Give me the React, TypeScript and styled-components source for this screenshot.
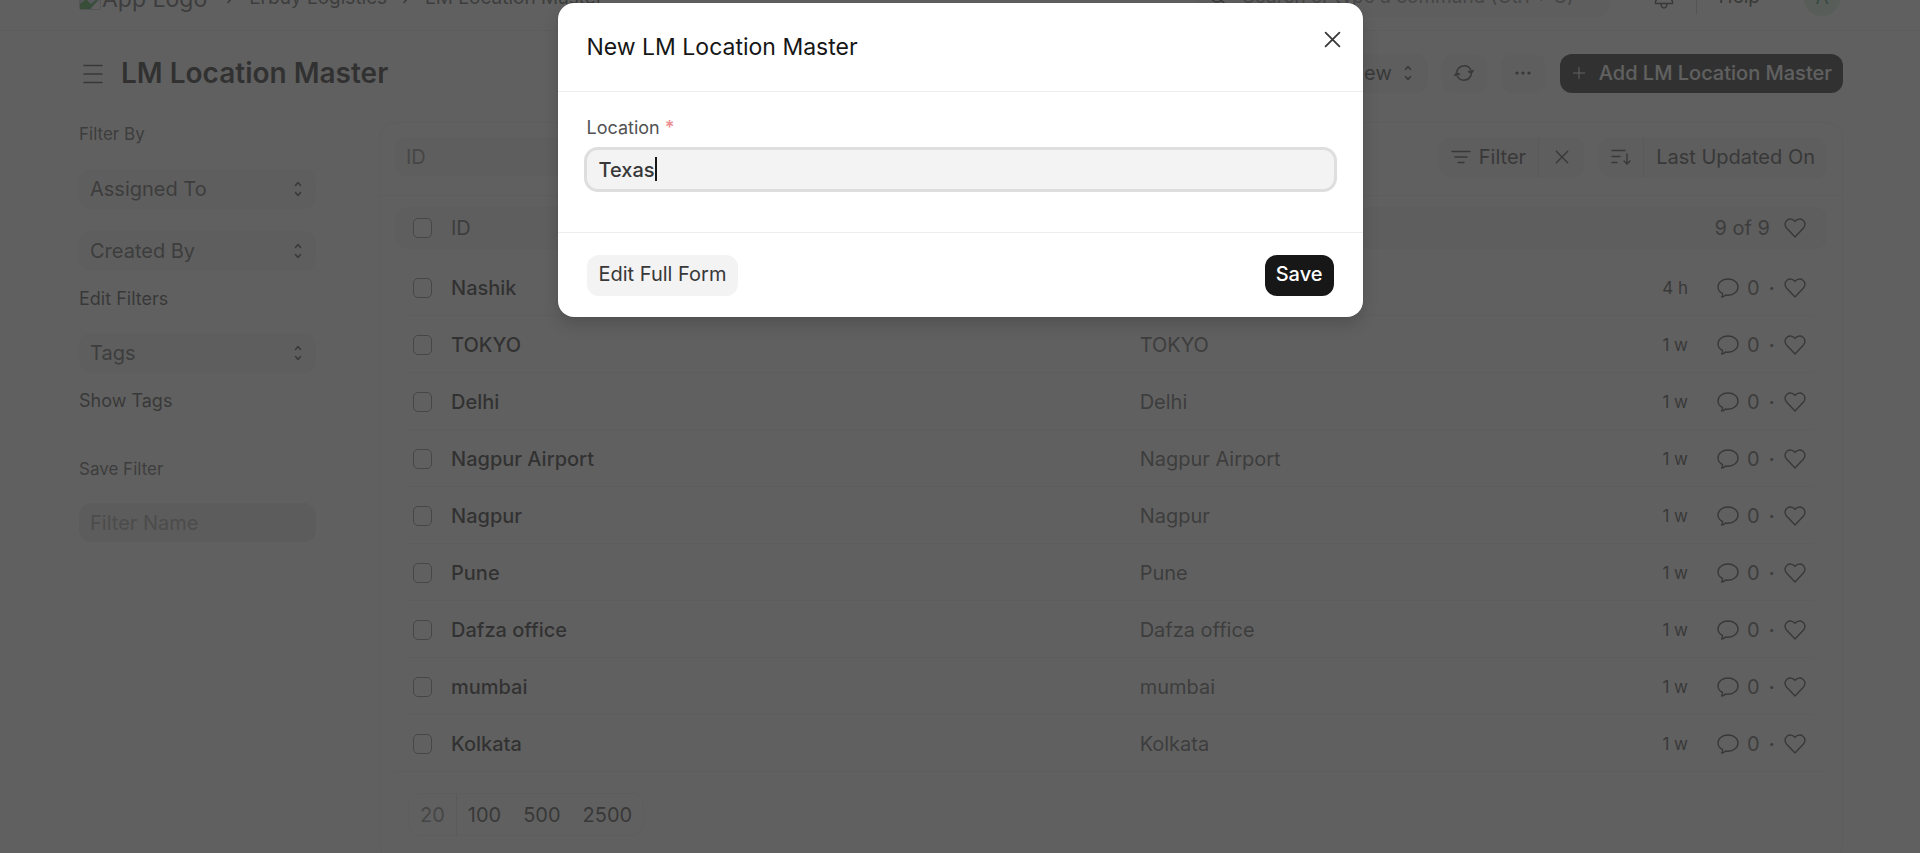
import React, { useState } from "react";
import styled, { createGlobalStyle } from "styled-components";

const Global = createGlobalStyle`
  * { box-sizing: border-box; }
  html, body { margin: 0; background: #fff; }
  body, button, input, select {
    font-family: Inter, "Liberation Sans", sans-serif;
    font-size: 20px;
    line-height: 24px;
    color: #383838;
  }
  button, input, select { border: 0; margin: 0; }
  button { cursor: pointer; }
  a { color: inherit; text-decoration: none; }
  svg { display: block; flex: none; }
`;

const Viewport = styled.div`
  position: relative;
  height: 100vh;
  overflow: hidden;
`;

const Page = styled.div`
  padding-bottom: 40px;
`;

const Navbar = styled.header`
  display: flex;
  align-items: center;
  justify-content: space-between;
  height: 69px;
  margin-top: -38px;
  padding: 0 79px;
  border-bottom: 1px solid #ededed;
  font-size: 19px;
`;

const Crumbs = styled.nav`
  display: flex;
  align-items: center;
  gap: 16px;
  padding-top: 4px;
  color: #525252;
`;

const Logo = styled.a`
  display: flex;
  align-items: center;
  gap: 1px;
  margin-right: 4px;
  padding-top: 2px;
  font-size: 23px;
  line-height: 28px;
`;

const NavTools = styled.div`
  display: flex;
  align-items: center;
`;

const SearchBox = styled.label`
  display: flex;
  align-items: center;
  gap: 16px;
  width: 414px;
  height: 42px;
  padding: 2px 14px 0;
  border-radius: 12px;
  background: #f3f3f3;
`;

const SearchInput = styled.input`
  flex: 1;
  min-width: 0;
  padding: 0;
  font-size: 19px;
  background: transparent;
  outline: 0;
  &::placeholder { color: #7c7c7c; opacity: 1; }
`;

const BellButton = styled.button`
  margin: 0 22px 0 45px;
  padding: 0;
  background: none;
`;

const HelpButton = styled.button`
  display: flex;
  align-items: center;
  gap: 9px;
  height: 36px;
  padding: 2px 24px 0 22px;
  font-size: 19px;
  background: none;
  border-left: 1px solid #c7c7c7;
`;

const Avatar = styled.span`
  display: grid;
  place-items: center;
  width: 38px;
  height: 40px;
  padding-top: 4px;
  border-radius: 50%;
  background: #daf0e1;
  color: #278f5e;
`;

const PageHead = styled.div`
  display: flex;
  align-items: center;
  justify-content: space-between;
  padding: 23px 77px 0 79px;
`;

const TitleGroup = styled.div`
  display: flex;
  align-items: center;
  gap: 14px;
`;

const Title = styled.h1`
  margin: 0;
  padding-bottom: 2px;
  font-size: 28px;
  line-height: 36px;
  font-weight: 600;
  color: #171717;
`;

const MenuButton = styled.button`
  padding: 0;
  background: none;
`;

const Actions = styled.div`
  display: flex;
  gap: 14px;
  > button { height: 39px; padding-bottom: 2px; }
`;

const Button = styled.button<{ $kind?: "dark" | "light"; $gap?: number }>`
  display: flex;
  align-items: center;
  justify-content: center;
  gap: ${(p) => p.$gap ?? 8}px;
  height: 41px;
  min-width: 45px;
  padding: 0 ${(p) => (p.$kind === "dark" ? 11 : 12)}px;
  border-radius: 12px;
  white-space: nowrap;
  background: ${(p) => (p.$kind === "dark" ? "#171717" : "#f3f3f3")};
  color: ${(p) => (p.$kind === "dark" ? "#fff" : "#383838")};
  font-weight: ${(p) => (p.$kind === "dark" ? 500 : 400)};
`;

const ViewButton = styled(Button)`
  padding-right: 16px;
`;

const Body = styled.div`
  display: grid;
  grid-template-columns: 237px minmax(0, 1fr);
  gap: 63px;
  padding: 29px 77px 0 79px;
`;

const Sidebar = styled.aside`
  display: flex;
  flex-direction: column;
  align-items: stretch;
`;

const SideLabel = styled.div<{ $top?: number }>`
  margin-top: ${(p) => p.$top ?? 0}px;
  font-size: 17px;
  line-height: 24px;
  color: #525252;
`;

const SideLink = styled.a`
  margin-top: 16px;
  font-size: 18px;
  line-height: 24px;
`;

const SideSelect = styled.button<{ $top: number }>`
  display: flex;
  align-items: center;
  justify-content: space-between;
  height: 40px;
  margin-top: ${(p) => p.$top}px;
  padding: 0 14px 0 11px;
  border-radius: 12px;
  background: #f3f3f3;
  color: #525252;
`;

const SideInput = styled.input`
  width: 100%;
  height: 39px;
  margin-top: 22px;
  padding: 0 11px;
  border-radius: 12px;
  background: #e9e9e9;
  outline: 0;
  &::placeholder { color: #999; opacity: 1; }
`;

const Card = styled.main`
  border: 1px solid #ededed;
  border-radius: 16px;
  padding-bottom: 24px;
`;

const FilterBar = styled.div`
  display: flex;
  align-items: flex-start;
  gap: 15px;
  height: 73px;
  padding: 14px 15px 0;
  border-bottom: 1px solid #ededed;
`;

const IdFilter = styled.input`
  width: 240px;
  height: 39px;
  padding: 0 11px;
  border-radius: 12px;
  background: #f3f3f3;
  outline: 0;
  &::placeholder { color: #7c7c7c; opacity: 1; }
`;

const Spacer = styled.div`
  flex: 1;
`;

const Split = styled.div`
  display: flex;
  border-radius: 12px;
  overflow: hidden;
  background: #f3f3f3;
  > button { border-radius: 0; background: none; min-width: 42px; padding-bottom: 2px; }
  > button + button { border-left: 1px solid #e2e2e2; min-width: 46px; }
`;

const TableWrap = styled.div`
  padding: 11px 15px 0;
`;

const Table = styled.table`
  width: 100%;
  table-layout: fixed;
  border-collapse: separate;
  border-spacing: 0;
`;

const HeadCell = styled.th`
  height: 42px;
  padding: 0;
  background: #f3f3f3;
  font-weight: 400;
  text-align: left;
  color: #525252;
  &:first-child { border-radius: 12px 0 0 12px; padding-left: 18px; }
  &:last-child { border-radius: 0 12px 12px 0; padding-right: 21px; }
`;

const GapCell = styled.td`
  height: 10px;
  padding: 0;
`;

const Cell = styled.td`
  position: relative;
  height: 57px;
  padding: 0;
  color: #525252;
  &:first-child { padding-left: 18px; }
  &:last-child { padding-right: 21px; }
  &::after {
    content: "";
    position: absolute;
    left: 0;
    right: 0;
    bottom: 0;
    height: 1px;
    background: #ededed;
  }
  &:first-child::after { left: 13px; }
  &:last-child::after { right: 14px; }
  tr:last-child > &::after { left: 0; right: 0; }
`;

const NameGroup = styled.div`
  display: flex;
  align-items: center;
  gap: 19px;
`;

const RowName = styled.a`
  font-weight: 500;
  color: #171717;
`;

const Check = styled.input`
  appearance: none;
  width: 19px;
  height: 20px;
  margin: 0;
  border: 1px solid #7c7c7c;
  border-radius: 5px;
  background: #fff;
`;

const Meta = styled.div`
  display: flex;
  align-items: center;
  justify-content: flex-end;
  color: #525252;
`;

const Age = styled.span`
  margin-right: 29px;
  font-size: 17px;
  color: #383838;
`;

const Dot = styled.span`
  margin: 0 9px;
  font-weight: 600;
`;

const Total = styled.span`
  margin-right: 14px;
`;

const Count = styled.span`
  margin-left: 8px;
`;

const IconButton = styled.button`
  padding: 0;
  background: none;
`;

const Pager = styled.div`
  display: inline-flex;
  height: 43px;
  margin: 21px 28px 0;
  border: 1px solid #ededed;
  border-radius: 12px;
  overflow: hidden;
`;

const PageSize = styled.button<{ $active?: boolean }>`
  padding: 0 11px;
  background: none;
  color: ${(p) => (p.$active ? "#7c7c7c" : "#383838")};
  border-right: ${(p) => (p.$active ? "1px solid #e2e2e2" : "0")};
`;

const Backdrop = styled.div`
  position: absolute;
  inset: 0;
  display: flex;
  justify-content: center;
  align-items: flex-start;
  padding-top: 3px;
  background: rgba(56, 56, 56, 0.8);
`;

const Dialog = styled.section`
  position: relative;
  width: 805px;
  max-width: 100%;
  border-radius: 16px;
  background: #fff;
  box-shadow: 0 0 1px rgba(0, 0, 0, 0.2), 0 8px 16px rgba(0, 0, 0, 0.15);
`;

const DialogHead = styled.div`
  display: flex;
  align-items: center;
  height: 89px;
  padding: 0 29px;
  border-bottom: 1px solid #ededed;
`;

const DialogTitle = styled.h2`
  margin: 0;
  font-size: 23px;
  line-height: 28px;
  font-weight: 400;
  color: #171717;
`;

const CloseButton = styled.button`
  position: absolute;
  top: 28px;
  right: 22px;
  padding: 0;
  background: none;
`;

const DialogBody = styled.div`
  height: 141px;
  padding: 24px 29px 0;
  border-bottom: 1px solid #ededed;
`;

const FieldLabel = styled.label`
  display: block;
  font-size: 18px;
  line-height: 24px;
  color: #525252;
`;

const Required = styled.span`
  color: #eb9091;
  font-weight: 600;
`;

const Field = styled.div`
  position: relative;
  margin-top: 10px;
`;

const TextInput = styled.input`
  display: block;
  width: 100%;
  height: 39px;
  padding: 0 12px;
  border-radius: 11px;
  background: #f3f3f3;
  box-shadow: 0 0 0 3px #dedede;
  font-weight: 500;
  outline: 0;
  caret-color: transparent;
`;

const Caret = styled.span`
  position: absolute;
  left: 68px;
  top: 7px;
  width: 2px;
  height: 24px;
  background: #171717;
`;

const DialogFoot = styled.div`
  display: flex;
  align-items: center;
  justify-content: space-between;
  height: 84px;
  padding: 0 29px;
  > button { padding-bottom: 2px; }
`;

type IconProps = { w: number; h: number; box: string; sw?: number; children: React.ReactNode };
const Icon = ({ w, h, box, sw = 1, children }: IconProps) => (
  <svg width={w} height={h} viewBox={box} fill="none" stroke="#383838" strokeWidth={sw} strokeLinecap="round" strokeLinejoin="round" aria-hidden="true">
    {children}
  </svg>
);

const UpDown = () => (
  <Icon w={8} h={16} box="0 0 8 16" sw={1.5}>
    <path d="M1.500 4.500 4 1.500l2.500 3M1.500 11.500l2.500 3 2.500-3" />
  </Icon>
);
const Heart = () => (
  <Icon w={22} h={20} box="0 0 22 20" sw={1.4}>
    <path d="M11 3.400C9 .6 5.300.4 3 2.200.6 4.200.3 7.400 2.500 10L11 19l8.500-9c2.200-2.600 1.900-5.800-.5-7.800C16.700.4 13 .6 11 3.400z" />
  </Icon>
);
const Comment = () => (
  <Icon w={22} h={20} box="0 0 22 20" sw={1.4}>
    <path d="M11 1C5.400 1 1 4.400 1 9c0 2.700 1.500 5 4.500 6.500.2 1-.1 2.300-1 3.500 1.500 0 3-.8 4-2 .8.200 1.600.200 2.500.200 5.600 0 10-3.600 10-8.200S16.600 1 11 1z" />
  </Icon>
);
const Cross = ({ size, sw = 1.6 }: { size: number; sw?: number }) => (
  <Icon w={size} h={size} box="0 0 16 16" sw={sw}>
    <path d="M1.500 1.500l13 13M14.500 1.500l-13 13" />
  </Icon>
);
const Chevron = () => (
  <Icon w={6} h={14} box="0 0 6 14" sw={1.5}>
    <path d="M1 2.500l4 4.500-4 4.500" />
  </Icon>
);

const rows: [string, string][] = [
  ["Nashik", "4 h"],
  ["TOKYO", "1 w"],
  ["Delhi", "1 w"],
  ["Nagpur Airport", "1 w"],
  ["Nagpur", "1 w"],
  ["Pune", "1 w"],
  ["Dafza office", "1 w"],
  ["mumbai", "1 w"],
  ["Kolkata", "1 w"],
];

export default function App() {
  const [location, setLocation] = useState("Texas");
  return (
    <Viewport>
      <Global />
      <Page>
        <Navbar>
          <Crumbs aria-label="Breadcrumb">
            <Logo href="#">
              <svg width="22" height="22" viewBox="0 0 22 22" aria-hidden="true">
                <path d="M1 1h14l6 6v14H1z" fill="#cfdcf7" stroke="#8a8a8a" />
                <path d="M1 21v-5l6-5 5 5 8-7v2L11 21z" fill="#3fa33f" />
                <path d="M12 21l9-9v9z" fill="#fff" />
              </svg>
              App Logo
            </Logo>
            <Chevron />
            <a href="#">Erbuy Logistics</a>
            <Chevron />
            <a href="#">LM Location Master</a>
          </Crumbs>
          <NavTools>
            <SearchBox>
              <Icon w={18} h={18} box="0 0 18 18" sw={1.5}>
                <circle cx="8" cy="8" r="6" />
                <path d="M12.500 12.500L17 17" />
              </Icon>
              <SearchInput aria-label="Search" placeholder="Search or type a command (Ctrl + G)" />
            </SearchBox>
            <BellButton aria-label="Notifications">
              <Icon w={20} h={25} box="0 0 20 25" sw={1.5}>
                <path d="M10 2C6 2 4 5 4 8.500V13l-2.500 4.500v2h17v-2L16 13V8.500C16 5 14 2 10 2zM7 20c.3 2.500 1.500 4 3 4s2.700-1.500 3-4" />
              </Icon>
            </BellButton>
            <HelpButton>
              Help
              <Icon w={10} h={8} box="0 0 10 8" sw={1.5}>
                <path d="M1.500 2L5 6l3.500-4" />
              </Icon>
            </HelpButton>
            <Avatar>A</Avatar>
          </NavTools>
        </Navbar>

        <PageHead>
          <TitleGroup>
            <MenuButton aria-label="Toggle sidebar">
              <Icon w={28} h={20} box="0 0 28 20" sw={1.5}>
                <path d="M5 1.500h18M5 10h18M5 18.500h18" />
              </Icon>
            </MenuButton>
            <Title>LM Location Master</Title>
          </TitleGroup>
          <Actions>
            <ViewButton $gap={12}>List View <UpDown /></ViewButton>
            <Button aria-label="Refresh">
              <Icon w={20} h={18} box="0 0 20 18" sw={1.500}>
                <path d="M2.800 7.500A7.500 7.500 0 0 1 17 6.500l.4 2.300M17.200 10.500A7.500 7.500 0 0 1 3 11.500l-.4-2.300M19.300 6.500l-1.900 2.500-2.900-1.500M.7 11.500l1.900-2.500 2.900 1.500" />
              </Icon>
            </Button>
            <Button aria-label="More">
              <Icon w={16} h={4} box="0 0 16 4" sw={0}>
                <g fill="#383838"><circle cx="2" cy="2" r="1.600" /><circle cx="8" cy="2" r="1.600" /><circle cx="14" cy="2" r="1.600" /></g>
              </Icon>
            </Button>
            <Button $kind="dark" $gap={12}>
              <svg width="16" height="16" viewBox="0 0 16 16" stroke="#fff" aria-hidden="true"><path d="M8 2v12M2 8h12" /></svg>
              Add LM Location Master
            </Button>
          </Actions>
        </PageHead>

        <Body>
          <Sidebar>
            <SideLabel>Filter By</SideLabel>
            <SideSelect $top={23}>Assigned To <UpDown /></SideSelect>
            <SideSelect $top={22}>Created By <UpDown /></SideSelect>
            <SideLink href="#">Edit Filters</SideLink>
            <SideSelect $top={22}>Tags <UpDown /></SideSelect>
            <SideLink href="#">Show Tags</SideLink>
            <SideLabel $top={44}>Save Filter</SideLabel>
            <SideInput aria-label="Filter Name" placeholder="Filter Name" />
          </Sidebar>

          <Card>
            <FilterBar>
              <IdFilter aria-label="ID" placeholder="ID" />
              <Spacer />
              <Split>
                <Button>
                  <Icon w={20} h={14} box="0 0 20 14" sw={1.400}>
                    <path d="M1 1.500h18M4 7h12M7 12.500h6" />
                  </Icon>
                  Filter
                </Button>
                <Button aria-label="Clear filters"><Cross size={14} /></Button>
              </Split>
              <Split>
                <Button aria-label="Sort direction">
                  <Icon w={20} h={16} box="0 0 20 16" sw={1.400}>
                    <path d="M1 1.500h13M1 7.500h8M1 13.500h5M16 5v9.500M13 12l3 3 3-3" />
                  </Icon>
                </Button>
                <Button>Last Updated On</Button>
              </Split>
            </FilterBar>
            <TableWrap>
              <Table>
                <colgroup>
                  <col style={{ width: "52%" }} />
                  <col />
                  <col style={{ width: "16%" }} />
                </colgroup>
                <thead>
                  <tr>
                    <HeadCell>
                      <NameGroup><Check type="checkbox" aria-label="Select all" />ID</NameGroup>
                    </HeadCell>
                    <HeadCell />
                    <HeadCell>
                      <Meta>
                        <Total>9 of 9</Total>
                        <IconButton aria-label="Liked"><Heart /></IconButton>
                      </Meta>
                    </HeadCell>
                  </tr>
                </thead>
                <tbody>
                  <tr><GapCell colSpan={3} /></tr>
                  {rows.map(([name, age]) => (
                    <tr key={name}>
                      <Cell>
                        <NameGroup>
                          <Check type="checkbox" aria-label={"Select " + name} />
                          <RowName href="#">{name}</RowName>
                        </NameGroup>
                      </Cell>
                      <Cell>{name}</Cell>
                      <Cell>
                        <Meta>
                          <Age>{age}</Age>
                          <Comment />
                          <Count>0</Count>
                          <Dot>·</Dot>
                          <IconButton aria-label={"Like " + name}><Heart /></IconButton>
                        </Meta>
                      </Cell>
                    </tr>
                  ))}
                </tbody>
              </Table>
            </TableWrap>
            <Pager>
              <PageSize $active>20</PageSize>
              <PageSize>100</PageSize>
              <PageSize>500</PageSize>
              <PageSize>2500</PageSize>
            </Pager>
          </Card>
        </Body>
      </Page>

      <Backdrop>
        <Dialog role="dialog" aria-modal="true" aria-labelledby="dialog-title">
          <DialogHead>
            <DialogTitle id="dialog-title">New LM Location Master</DialogTitle>
            <CloseButton aria-label="Close"><Cross size={17} sw={1.700} /></CloseButton>
          </DialogHead>
          <DialogBody>
            <FieldLabel htmlFor="location">Location <Required>*</Required></FieldLabel>
            <Field>
              <TextInput id="location" value={location} onChange={(e) => setLocation(e.target.value)} />
              <Caret />
            </Field>
          </DialogBody>
          <DialogFoot>
            <Button>Edit Full Form</Button>
            <Button $kind="dark">Save</Button>
          </DialogFoot>
        </Dialog>
      </Backdrop>
    </Viewport>
  );
}
